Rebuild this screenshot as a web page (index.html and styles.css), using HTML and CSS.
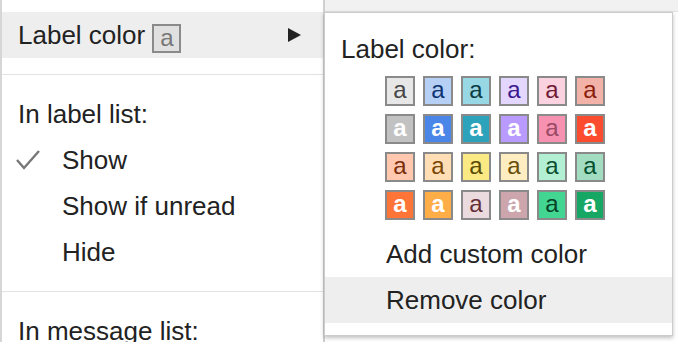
FILE: index.html
```html
<!DOCTYPE html>
<html lang="en">
<head>
    <meta charset="UTF-8">
    <meta name="viewport" content="width=device-width, initial-scale=1.0">
    <title>Label color</title>
    <link rel="stylesheet" href="styles.css">
</head>
<body>

<div class="screen">
    <div class="menu">
        <div class="item item-hover">
            <span>Label color <span class="chip chip-current">a</span></span>
            <span class="arrow"></span>
        </div>
        <div class="sep"></div>
        <div class="item">In label list:</div>
        <div class="item option">
            <svg class="check" width="26" height="24" viewBox="0 0 26 24">
                <polyline points="2,12 9,20 24,3" fill="none" stroke="#777" stroke-width="2.4"/>
            </svg>
            Show
        </div>
        <div class="item option">Show if unread</div>
        <div class="item option">Hide</div>
        <div class="sep"></div>
        <div class="item">In message list:</div>
    </div>

    <div class="side">
        <div class="topbar"></div>
        <div class="submenu">
            <div class="item sub-title">Label color:</div>
            <div class="palette">
                <span class="chip c-gray">a</span>
                <span class="chip c-blue">a</span>
                <span class="chip c-teal">a</span>
                <span class="chip c-purple">a</span>
                <span class="chip c-pink">a</span>
                <span class="chip c-red">a</span>

                <span class="chip c-gray2">a</span>
                <span class="chip c-blue2">a</span>
                <span class="chip c-teal2">a</span>
                <span class="chip c-purple2">a</span>
                <span class="chip c-pink2">a</span>
                <span class="chip c-red2">a</span>

                <span class="chip c-peach">a</span>
                <span class="chip c-sand">a</span>
                <span class="chip c-yellow">a</span>
                <span class="chip c-cream">a</span>
                <span class="chip c-mint">a</span>
                <span class="chip c-sea">a</span>

                <span class="chip c-orange">a</span>
                <span class="chip c-amber">a</span>
                <span class="chip c-rose">a</span>
                <span class="chip c-mauve">a</span>
                <span class="chip c-green">a</span>
                <span class="chip c-green2">a</span>
            </div>
            <div class="item sub-item">Add custom color</div>
            <div class="item sub-item item-hover">Remove color</div>
        </div>
    </div>
</div>

</body>
</html>
```

FILE: styles.css
```css
body {
    margin: 0;
    font-family: 'Liberation Sans', Arial, sans-serif;
    background-color: #fff;
    color: #222;
    overflow: hidden;
}

.screen {
    display: flex;
    width: 678px;
    height: 342px;
    overflow: hidden;
}

/* main menu */
.menu {
    width: 321px;
    flex-shrink: 0;
    padding-top: 12px;
    border-left: 2px solid #d6d6d6;
    border-right: 2px solid #d0d0d0;
    background-color: #fff;
}

.item {
    height: 46px;
    line-height: 46px;
    font-size: 26px;
    padding-left: 16px;
    white-space: nowrap;
}

.item-hover {
    background-color: #eee;
}

.menu .item:first-child {
    display: flex;
    justify-content: space-between;
    align-items: center;
    padding-right: 22px;
}

.option {
    position: relative;
    padding-left: 60px;
}

.check {
    position: absolute;
    left: 13px;
    top: 11px;
}

.arrow {
    width: 0;
    height: 0;
    border-top: 7px solid transparent;
    border-bottom: 7px solid transparent;
    border-left: 13px solid #222;
}

.sep {
    height: 1px;
    margin: 16px 0;
    background-color: #e3e3e3;
}

/* colour chips */
.chip {
    display: inline-block;
    box-sizing: border-box;
    width: 30px;
    height: 30px;
    border: 2px solid #8a8a8a;
    font-size: 24px;
    line-height: 24px;
    text-align: center;
    vertical-align: middle;
}

.chip-current {
    width: 29px;
    height: 29px;
    line-height: 23px;
    background-color: #e0e0e0;
    color: #777;
    position: relative;
    top: 1px;
}

/* right side */
.side {
    flex: 1;
}

.topbar {
    height: 11px;
    background-color: #f1f1f1;
    border-bottom: 1px solid #e0e0e0;
}

.submenu {
    width: 347px;
    margin-left: -1px;
    padding: 13px 0 12px;
    background-color: #fff;
    border: 1px solid #ccc;
    box-shadow: 0 2px 4px rgba(0, 0, 0, 0.25);
}

.sub-title {
    padding-left: 16px;
}

.sub-item {
    padding-left: 61px;
}

.palette {
    display: grid;
    grid-template-columns: repeat(6, 30px);
    gap: 8px;
    padding: 4px 0 11px 60px;
}

.c-gray { background-color: #e7e7e7; color: #464646; }
.c-blue { background-color: #b6cff5; color: #0d3472; }
.c-teal { background-color: #98d7e4; color: #0d3b44; }
.c-purple { background-color: #e3d7ff; color: #3d188e; }
.c-pink { background-color: #fbd3e0; color: #711a36; }
.c-red { background-color: #f2b2a8; color: #8a1c0a; }

.c-gray2 { background-color: #c2c2c2; color: #fff; font-weight: bold; }
.c-blue2 { background-color: #4986e7; color: #fff; font-weight: bold; }
.c-teal2 { background-color: #2da2bb; color: #fff; font-weight: bold; }
.c-purple2 { background-color: #b99aff; color: #fff; font-weight: bold; }
.c-pink2 { background-color: #f691b2; color: #994a64; }
.c-red2 { background-color: #fb4c2f; color: #fff; font-weight: bold; }

.c-peach { background-color: #ffc8af; color: #7a2e0b; }
.c-sand { background-color: #ffdeb5; color: #7a4706; }
.c-yellow { background-color: #fbe983; color: #594c05; }
.c-cream { background-color: #fdedc1; color: #684e07; }
.c-mint { background-color: #b3efd3; color: #0b4f30; }
.c-sea { background-color: #a2dcc1; color: #04502e; }

.c-orange { background-color: #ff7537; color: #fff; font-weight: bold; }
.c-amber { background-color: #ffad46; color: #fff; font-weight: bold; }
.c-rose { background-color: #ebdbde; color: #662e37; }
.c-mauve { background-color: #cca6ac; color: #fff; font-weight: bold; }
.c-green { background-color: #42d692; color: #094228; }
.c-green2 { background-color: #16a765; color: #fff; font-weight: bold; }
```
